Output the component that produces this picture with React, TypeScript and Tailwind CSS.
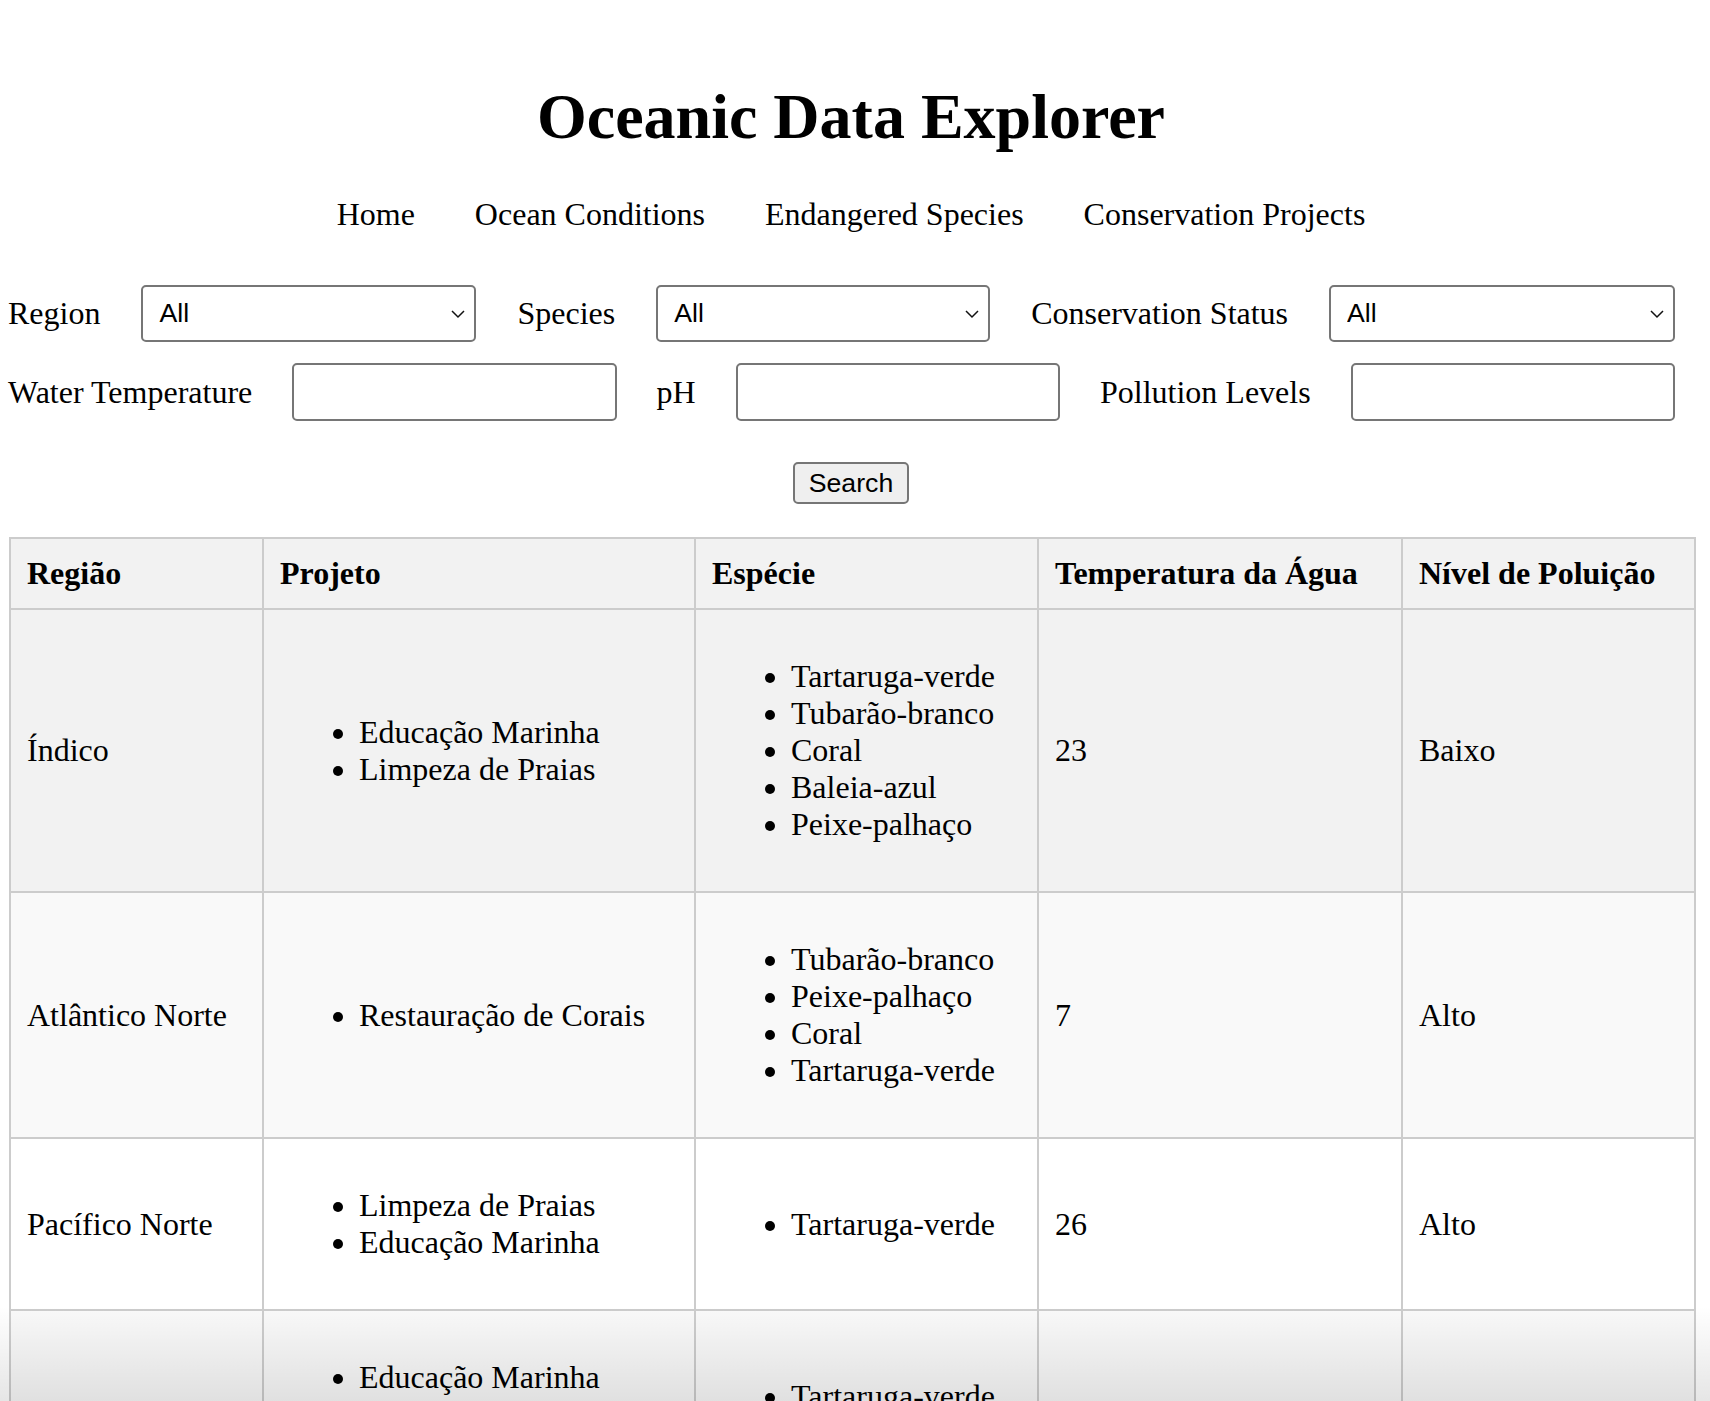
import React from "react";

type Linha = {
  regiao: string;
  projetos: string[];
  especies: string[];
  temperatura: number;
  poluicao: string;
};

const linhas: Linha[] = [
  {
    regiao: "Índico",
    projetos: ["Educação Marinha", "Limpeza de Praias"],
    especies: ["Tartaruga-verde", "Tubarão-branco", "Coral", "Baleia-azul", "Peixe-palhaço"],
    temperatura: 23,
    poluicao: "Baixo",
  },
  {
    regiao: "Atlântico Norte",
    projetos: ["Restauração de Corais"],
    especies: ["Tubarão-branco", "Peixe-palhaço", "Coral", "Tartaruga-verde"],
    temperatura: 7,
    poluicao: "Alto",
  },
  {
    regiao: "Pacífico Norte",
    projetos: ["Limpeza de Praias", "Educação Marinha"],
    especies: ["Tartaruga-verde"],
    temperatura: 26,
    poluicao: "Alto",
  },
  {
    regiao: "Atlântico Sul",
    projetos: ["Educação Marinha", "Restauração de Corais", "Limpeza de Praias", "Pesquisa Marinha"],
    especies: ["Tartaruga-verde", "Baleia-azul", "Coral"],
    temperatura: 18,
    poluicao: "Médio",
  },
];

// fundo de cada linha (a primeira está com hover)
const fundos = ["bg-[#f2f2f2]", "bg-[#f9f9f9]", "bg-white", "bg-[#f9f9f9]"];

function Seletor({ largura }: { largura: string }) {
  return (
    <div className={"relative min-w-0 " + largura}>
      <select className="h-[57px] w-full appearance-none rounded-[5px] border-2 border-[#767676] bg-white pl-[16px] font-['Liberation_Sans',sans-serif] text-[26.67px] text-black outline-none">
        <option>All</option>
      </select>
      <svg
        className="pointer-events-none absolute right-[11px] top-1/2 -translate-y-1/2"
        width="14"
        height="9"
        viewBox="0 0 14 9"
      >
        <path d="M1 1.5l6 6 6-6" fill="none" stroke="#111" strokeWidth="1.5" />
      </svg>
    </div>
  );
}

function Campo() {
  return (
    <input
      type="text"
      className="h-[58px] min-w-0 flex-1 rounded-[5px] border-2 border-[#767676] bg-white outline-none"
    />
  );
}

function Lista({ itens }: { itens: string[] }) {
  return (
    <ul className="my-[32px] list-disc pl-[79px]">
      {itens.map((item) => (
        <li key={item}>{item}</li>
      ))}
    </ul>
  );
}

export default function App() {
  const celula = "border-2 border-[#cccccc] px-[16px] py-[16px] text-left align-middle";

  return (
    <div className="relative h-[1401px] overflow-hidden bg-white pl-[8px] pr-[16px] pt-[80px] font-['Liberation_Serif',serif] text-[32px] leading-[37px] text-black">
      <h1 className="m-0 text-center text-[64px] font-bold leading-[74px]">Oceanic Data Explorer</h1>

      <nav className="mt-[42px] flex justify-center gap-[60px]">
        <a>Home</a>
        <a>Ocean Conditions</a>
        <a>Endangered Species</a>
        <a>Conservation Projects</a>
      </nav>

      <div className="mt-[52px] pr-[19px]">
        <div className="flex items-center gap-[41px]">
          <label className="whitespace-nowrap">Region</label>
          <Seletor largura="w-[335px] shrink-0" />
          <label className="whitespace-nowrap">Species</label>
          <Seletor largura="w-[334px] shrink-0" />
          <label className="whitespace-nowrap">Conservation Status</label>
          <Seletor largura="flex-1" />
        </div>
        <div className="mt-[21px] flex items-center gap-[40px]">
          <label className="whitespace-nowrap">Water Temperature</label>
          <Campo />
          <label className="whitespace-nowrap">pH</label>
          <Campo />
          <label className="whitespace-nowrap">Pollution Levels</label>
          <Campo />
        </div>
        <div className="mt-[41px] flex justify-center pl-[19px]">
          <button
            type="button"
            className="h-[42px] rounded-[5px] border-2 border-[#767676] bg-[#efefef] px-[14px] font-['Liberation_Sans',sans-serif] text-[26.67px] leading-none text-black"
          >
            Search
          </button>
        </div>
      </div>

      <table className="ml-[1px] mt-[33px] w-[1685px] table-fixed border-collapse">
        <colgroup>
          <col className="w-[253px]" />
          <col className="w-[432px]" />
          <col className="w-[343px]" />
          <col className="w-[364px]" />
          <col className="w-[293px]" />
        </colgroup>
        <thead>
          <tr className="bg-[#f2f2f2]">
            <th className={celula + " font-bold"}>Região</th>
            <th className={celula + " font-bold"}>Projeto</th>
            <th className={celula + " font-bold"}>Espécie</th>
            <th className={celula + " font-bold"}>Temperatura da Água</th>
            <th className={celula + " font-bold"}>Nível de Poluição</th>
          </tr>
        </thead>
        <tbody>
          {linhas.map((linha, index) => (
            <tr key={linha.regiao} className={fundos[index]}>
              <td className={celula}>{linha.regiao}</td>
              <td className={celula}>
                <Lista itens={linha.projetos} />
              </td>
              <td className={celula}>
                <Lista itens={linha.especies} />
              </td>
              <td className={celula}>{linha.temperatura}</td>
              <td className={celula}>{linha.poluicao}</td>
            </tr>
          ))}
        </tbody>
      </table>

      <div className="pointer-events-none absolute inset-x-0 bottom-0 h-[95px] bg-linear-to-b from-transparent to-black/10" />
    </div>
  );
}
